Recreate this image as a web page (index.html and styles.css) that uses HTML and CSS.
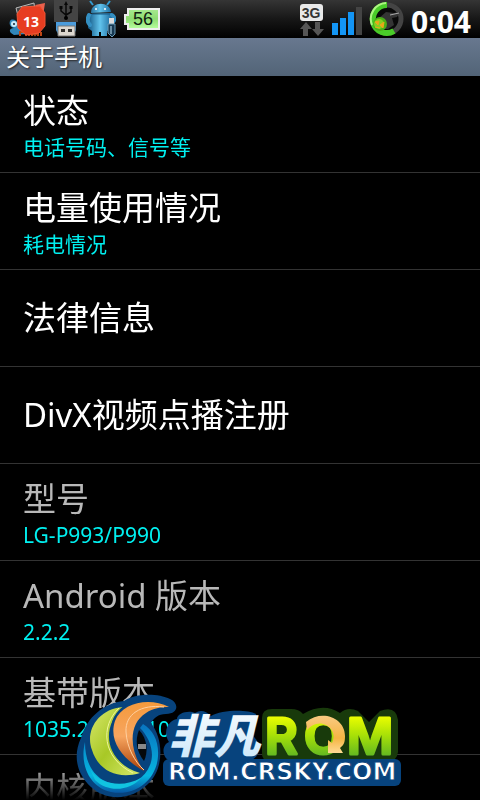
FILE: index.html
```html
<!DOCTYPE html>
<html lang="zh-CN">
<head>
<meta charset="utf-8">
<meta name="viewport" content="width=device-width, initial-scale=1">
<title>关于手机</title>
<link rel="stylesheet" href="styles.css">
</head>
<body>
<div class="phone">
  <header class="status">
    <div class="icons">
      <svg class="icon-rss" width="38" height="38" viewBox="8 0 38 38" aria-hidden="true">
        <path d="M16 8L34 3L35 12L18 16Z" fill="#444" stroke="#bbb"/>
        <path d="M35 5L45 3L43 16Z" fill="#e9604c"/>
        <path d="M10 21C12 18 17 20 18 24L26 34L14 35C8 32 9 28 14 28C10 27 9 24 10 21Z" fill="#3186ba"/>
        <circle cx="14" cy="24" r="3" fill="#c9ebfa"/><circle cx="14" cy="24" r="1" fill="#123"/>
        <path d="M20 36V32H24M26 36V32H29V36M32 36V32L35 35L38 32V36M41 36V32" fill="none" stroke="#bc4514" stroke-width="2"/>
        <path d="M22 7L40 6L45 13L45 26L39 33L26 35L18 28L17 14Z" fill="#e73d21" stroke="#f05535" stroke-linejoin="round"/>
        <text x="31" y="27" class="count">13</text>
      </svg>
      <svg class="icon-usb" width="24" height="38" viewBox="54 0 24 38" aria-hidden="true">
        <path d="M54 0H78V22H54Z" fill="#444"/>
        <path d="M66 3V19M61 8V11L66 15L71 12V8" fill="none" stroke="#080808" stroke-width="1.5"/>
        <path d="M64 5L66 1L68 5ZM59.500 6H62.500V9H59.500ZM69.500 6H72.500V9H69.500Z" fill="#080808"/><circle cx="66" cy="18" r="2"/>
        <path d="M56 22H76V30L73 36H59L56 30Z" fill="#4b9cdc"/>
        <path d="M58 26H75V36H58Z" fill="#ddd8d0" stroke="#777"/><path d="M61 29H65V32H61ZM68 29H72V32H68Z" fill="#302e2c"/>
      </svg>
      <svg class="icon-droid" width="30" height="38" viewBox="89 0 30 38" aria-hidden="true">
        <defs><linearGradient id="droid" x2="1"><stop stop-color="#145987"/><stop offset=".5" stop-color="#62c4ed"/><stop offset="1" stop-color="#1a679b"/></linearGradient></defs>
        <path d="M96 5L93 1M110 5L113 1" stroke="#349bd0" stroke-width="2"/>
        <path d="M94 13C94 1 113 1 114 12ZM92 14L115 13V28Q113 31 110 31V36H104V32H102V36H95V31L91 28Z" fill="url(#droid)"/>
        <path d="M92 15Q89 21 93 25M115 15Q119 18 116 22" fill="none" stroke="#348fc2" stroke-width="4" stroke-linecap="round"/>
        <path d="M95 14H113" stroke="#145987"/>
        <circle cx="99" cy="9" r="1" fill="#fff"/><circle cx="108" cy="9" r="1" fill="#fff"/>
        <path d="M112 18H117V24H112Z" fill="#ddd"/><path d="M111 24H118V34L115 37L111 33Z" fill="#183a53" stroke="#699bb8"/><path d="M114 26V34" stroke="#bce3f6"/>
      </svg>
      <svg class="icon-battery" width="37" height="24" viewBox="124 6 37 24" role="img" aria-label="56">
        <defs><linearGradient id="cell" x2="0" y2="1"><stop stop-color="#a8ea91"/><stop offset=".5" stop-color="#8edc71"/><stop offset="1" stop-color="#b8ffa0"/></linearGradient></defs>
        <path d="M128 8H159V28H128V23H125V14H128Z" fill="url(#cell)" stroke="#eee" stroke-width="2"/>
        <text x="143" y="24" class="level">56</text>
      </svg>
    </div>
    <div class="signals">
      <svg width="27" height="38" viewBox="298 0 27 38" role="img" aria-label="3G">
        <rect x="299" y="4" width="23" height="17" rx="3" fill="#e8e8e8"/>
        <text x="310" y="18" class="network">3G</text>
        <path d="M305 22L311 29H307V36H302V29H299ZM314 22H319V29H323L317 36L311 29H314Z" fill="#555"/>
      </svg>
      <svg width="31" height="38" viewBox="333 0 31 38" aria-hidden="true">
        <path d="M333 23H339V35H333ZM341 18H347V35H341ZM349 12H355V35H349Z" fill="#1395f5"/><path d="M357 7H363V35H357Z" fill="#444"/>
      </svg>
      <svg width="36" height="38" viewBox="368 0 36 38" aria-hidden="true">
        <circle cx="386" cy="19" r="14" fill="#090909" stroke="#444" stroke-width="5"/>
        <path d="M386 5A14 14 0 1 0 393 31" fill="none" stroke="#49cc29" stroke-width="6"/>
        <path d="M385 3A16 16 0 0 0 371 25" fill="none" stroke="#aef482" stroke-width="2"/>
        <path d="M378 18L385 12L393 13L399 12L396 17L391 18L393 25L387 29L379 29Z" fill="#343434"/><path d="M389 15L398 13" stroke="#aaa"/>
        <circle cx="379" cy="24" r="7" fill="#49af17"/><circle cx="378" cy="24" r="5" fill="#84cf20"/>
        <path d="M374 22L378 21L377 25ZM379 25L383 22L382 28ZM374 27L379 28" fill="#e8a819" stroke="#e8a819"/>
      </svg>
      <time>0:04</time>
    </div>
  </header>
  <h1>关于手机</h1>
  <main>
    <ul class="settings">
      <li><a href="#status"><span class="name">状态</span><span class="detail">电话号码、信号等</span></a></li>
      <li><a href="#battery"><span class="name">电量使用情况</span><span class="detail">耗电情况</span></a></li>
      <li><a href="#legal"><span class="name">法律信息</span></a></li>
      <li><a href="#divx"><span class="name">DivX视频点播注册</span></a></li>
      <li class="info"><span class="name">型号</span><span class="detail">LG-P993/P990</span></li>
      <li class="info"><span class="name">Android 版本</span><span class="detail">2.2.2</span></li>
      <li class="info"><span class="name">基带版本</span><span class="detail">1035.21_20110</span></li>
      <li class="info"><span class="name">内核版本</span></li>
    </ul>
  </main>
  <svg class="brand" width="330" height="110" viewBox="76 690 330 110" role="img" aria-label="非凡ROM ROM.CRSKY.COM">
    <defs>
      <linearGradient id="leaf" x2="1" y2="1"><stop stop-color="#d8e86c"/><stop offset=".5" stop-color="#a8c826"/><stop offset="1" stop-color="#d5e96b"/></linearGradient>
      <linearGradient id="flame" x2="0" y2="1"><stop stop-color="#f49a3c"/><stop offset=".5" stop-color="#f7a55f"/><stop offset="1" stop-color="#a94008"/></linearGradient>
      <linearGradient id="wave" x2="0" y2="1"><stop stop-color="#0874c0"/><stop offset=".75" stop-color="#06b4df"/><stop offset="1" stop-color="#0758a5"/></linearGradient>
      <linearGradient id="lime" gradientUnits="userSpaceOnUse" x1="0" x2="0" y1="716" y2="756"><stop stop-color="#edff00"/><stop offset=".5" stop-color="#a5df08"/><stop offset="1" stop-color="#62b821"/></linearGradient>
      <linearGradient id="ice" x2="0" y2="1"><stop stop-color="#fff"/><stop offset="1" stop-color="#c7e6fa"/></linearGradient>
      <linearGradient id="gold" x2="0" y2="1"><stop stop-color="#f9ca82"/><stop offset=".6" stop-color="#f5b443"/><stop offset="1" stop-color="#ffdb94"/></linearGradient>
    </defs>
    <path d="M125 701C136 693 159 693 171 699C180 703 180 714 167 714C159 714 155 718 152 723C165 740 165 769 149 784C132 801 107 801 92 787C77 773 74 755 82 738C88 717 105 703 125 701Z" fill="#07437d"/>
    <path d="M140 730C149 739 149 753 145 761C137 751 136 740 140 730Z" fill="#05080a"/><path d="M139 744H147V749H139Z" fill="#888"/>
    <path d="M86 742C80 766 92 788 112 792C137 797 158 779 159 756C160 741 154 730 144 724L141 728C151 738 156 753 151 765C143 785 121 789 104 780C92 773 86 760 86 742Z" fill="url(#wave)"/>
    <path d="M91 769C101 785 124 788 142 778C131 791 109 793 96 780Z" fill="#11c3df"/>
    <path d="M124 707C98 709 86 732 93 750C99 770 118 780 141 773C109 764 99 730 124 707Z" fill="url(#leaf)" stroke="#07437d" stroke-width="3" paint-order="stroke"/>
    <path d="M120 708C101 726 103 758 134 773" fill="none" stroke="#eff69b"/>
    <path d="M170 707C151 697 123 702 116 721C109 742 125 760 145 771C130 751 129 724 147 713C154 708 162 707 170 707Z" fill="url(#flame)" stroke="#07437d" stroke-width="5" paint-order="stroke"/>
    <path d="M165 707C142 704 126 714 127 732C128 748 136 762 145 770" fill="none" stroke="#ffd0a0"/>
    <path d="M178 719C178 713 190 710 196 713Q204 708 212 716C222 710 248 709 257 714L255 737C264 745 261 762 245 761H172C164 760 161 746 170 742C163 731 170 720 178 719Z" fill="#07437d"/>
    <path d="M263 718Q263 709 273 709H292Q300 709 304 714Q324 702 341 713Q349 706 359 711L370 722L381 711Q397 705 399 720V752Q398 762 387 762H272Q262 761 263 752Z" fill="#183a0b"/>
    <rect x="164" y="759" width="238" height="27" rx="6" fill="#07437d"/>
    <g class="rom"><text x="266" y="754">R</text><text x="305" y="754">O</text><text x="348" y="754">M</text></g>
    <path d="M307 722C323 709 346 718 346 736C346 742 345 745 341 748L344 753H329L329 740L333 743C339 731 327 721 317 724C313 725 311 727 308 730Z" fill="url(#gold)"/>
    <text x="169" y="753" class="brand-name">非凡</text>
    <text x="169" y="780" class="domain">ROM.CRSKY.COM</text>
  </svg>
</div>
</body>
</html>
```
FILE: styles.css
```css
* {
  box-sizing: border-box;
}

body {
  margin: 0;
  background: #000;
  color: #fff;
  font-family: "Noto Sans", "Noto Sans CJK SC", sans-serif;
}

.phone {
  position: relative;
  display: flex;
  flex-direction: column;
  height: 100vh;
  overflow: hidden;
}

.status {
  display: flex;
  justify-content: space-between;
  flex: none;
  height: 38px;
  padding: 0 9px 0 8px;
  background: linear-gradient(#353535, #171717 50%, #000);
}

.icons,
.signals {
  display: flex;
  align-items: center;
}

.icons {
  gap: 8px;
}

.signals {
  gap: 6px;
}

.status svg {
  display: block;
}

time {
  padding-top: 5px;
  font-size: 30px;
  line-height: 42px;
  font-weight: 700;
  font-family: "Open Sans", sans-serif;
}

.count {
  font: 700 14px "Open Sans", sans-serif;
  fill: #fff;
  text-anchor: middle;
}

.level {
  font: 18px "Liberation Sans", sans-serif;
  fill: #102010;
  text-anchor: middle;
}

.network {
  font: 700 14px "Liberation Sans", sans-serif;
  fill: #333;
  text-anchor: middle;
}

h1 {
  flex: none;
  margin: 0;
  padding: 0 6px;
  height: 38px;
  background: linear-gradient(#68788f, #526477);
  font-size: 24px;
  line-height: 38px;
  font-weight: 400;
  text-shadow: 1px 1px 2px #222;
}

main {
  flex: 1;
  min-height: 0;
  overflow: hidden;
  mask-image: linear-gradient(#000 calc(100% - 32px), transparent);
}

.settings {
  margin: 0;
  padding: 0;
  list-style: none;
}

.settings li {
  height: 97px;
  border-bottom: 1px solid #333;
}

.settings a,
.info {
  display: flex;
  flex-direction: column;
  justify-content: center;
  height: 100%;
  padding: 0 23px;
  color: #fff;
  text-decoration: none;
}

.name {
  font-size: 33px;
  line-height: 46px;
}

.detail {
  color: #00f0f0;
  font-size: 21px;
  line-height: 26px;
}

.info .name {
  color: #b8b8b8;
}

.info:last-child {
  justify-content: flex-start;
  padding-top: 11px;
}

.brand {
  position: absolute;
  bottom: 0;
  left: 50%;
  transform: translateX(-50%);
}

.rom {
  font: 600 50px Inter, sans-serif;
  fill: url(#lime);
  stroke: url(#lime);
  stroke-width: 3px;
  stroke-linejoin: round;
}

.brand-name {
  font: italic 900 46px "Noto Sans CJK SC", sans-serif;
  fill: url(#ice);
}

.domain {
  font: 700 24px "DejaVu Sans", sans-serif;
  fill: #fff;
  stroke: #07437d;
  stroke-width: 1px;
}
```
